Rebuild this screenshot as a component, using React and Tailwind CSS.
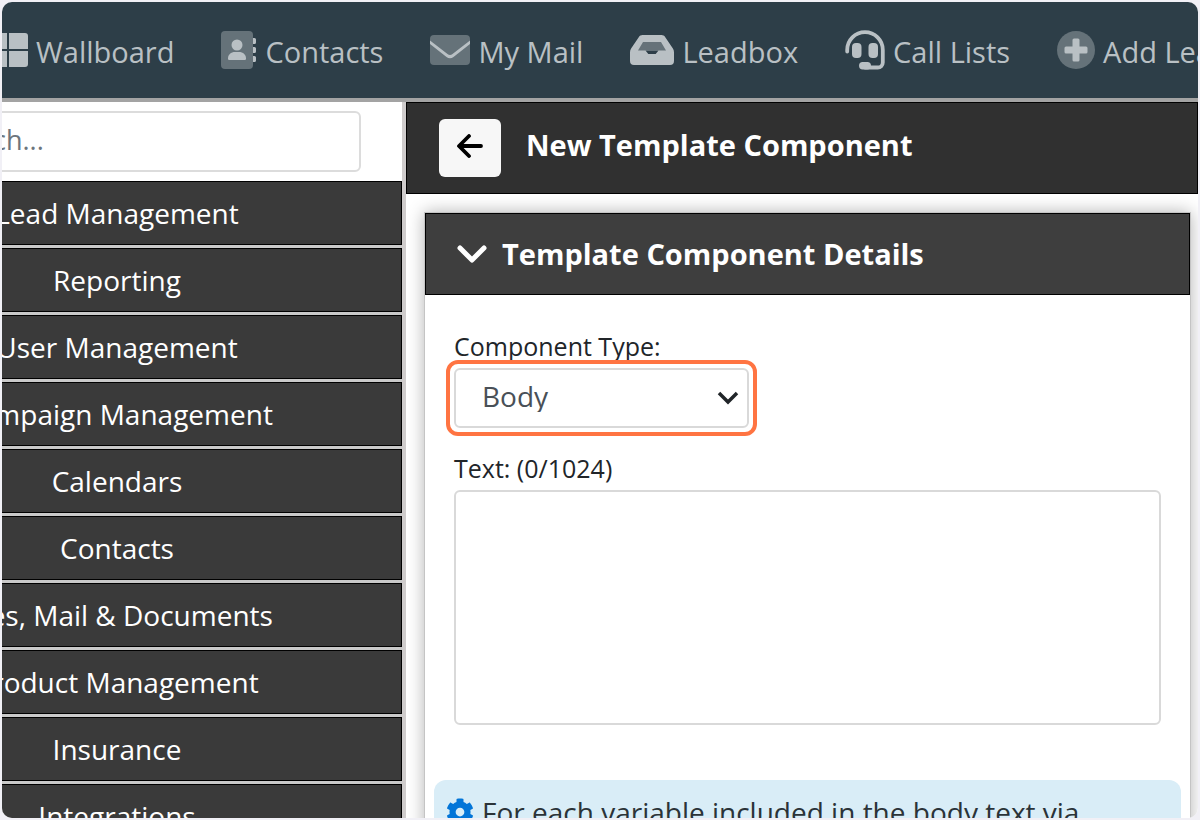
import React from "react";

function GridIcon() {
  return (
    <svg viewBox="0 0 40 36" className="h-9 w-10 shrink-0" fill="currentColor" aria-hidden="true">
      <path d="M3 1h16v16H0V4a3 3 0 0 1 3-3zM21 1h16a3 3 0 0 1 3 3v13H21zM0 19h19v16H3a3 3 0 0 1-3-3zM21 19h19v13a3 3 0 0 1-3 3H21z" />
    </svg>
  );
}

function ContactsIcon() {
  return (
    <svg viewBox="0 0 36 38" className="h-[38px] w-9 shrink-0" fill="currentColor" aria-hidden="true">
      <rect x="0" y="0" width="32" height="38" rx="4" opacity="0.4" />
      <circle cx="16" cy="14" r="5.5" />
      <path d="M7 27.5c0-4 3-6.500 7-6.500h4c4 0 7 2.500 7 6.500 0 1-.6 1.500-1.500 1.500h-15C7.600 29 7 28.500 7 27.500z" />
      <path d="M32 7h1.500a1.500 1.500 0 0 1 1.500 1.500v3a1.500 1.500 0 0 1-1.500 1.500H32zM32 16h1.500a1.500 1.500 0 0 1 1.500 1.500v3a1.500 1.500 0 0 1-1.500 1.500H32zM32 25h1.500a1.500 1.500 0 0 1 1.500 1.500v3a1.500 1.500 0 0 1-1.500 1.500H32z" />
    </svg>
  );
}

function MailIcon() {
  return (
    <svg viewBox="0 0 40 30" className="h-[30px] w-10 shrink-0" fill="currentColor" aria-hidden="true">
      <path opacity="0.4" d="M4 0h32a4 4 0 0 1 4 4v22a4 4 0 0 1-4 4H4a4 4 0 0 1-4-4V4a4 4 0 0 1 4-4z" />
      <path d="M0 5.500v3.500l16.500 13c2.200 1.700 4.800 1.700 7 0L40 9V5.500L22.500 19c-1.600 1.200-3.400 1.200-5 0z" />
    </svg>
  );
}

function InboxIcon() {
  return (
    <svg viewBox="0 0 44 30" className="h-[30px] w-11 shrink-0" fill="currentColor" aria-hidden="true">
      <path opacity="0.4" d="M12 5h20l6 11H6z" />
      <path
        fillRule="evenodd"
        d="M12.500 0h19c1.500 0 2.800.7 3.600 1.900l7.800 11.700c.7 1 1.100 2.300 1.100 3.600V26a4 4 0 0 1-4 4H4a4 4 0 0 1-4-4v-8.800c0-1.300.4-2.600 1.100-3.600L8.900 1.900C9.700.7 11 0 12.500 0zM13 7 8 15.500h7.500l2.800 3.500h7.400l2.800-3.500H36L31 7z"
      />
    </svg>
  );
}

function HeadsetIcon() {
  return (
    <svg viewBox="0 0 40 40" className="size-10 shrink-0" fill="none" stroke="currentColor" aria-hidden="true">
      <path d="M2.200 21.500V20a17.800 17.800 0 0 1 35.600 0v12.500a5 5 0 0 1-5 5H20" strokeWidth="3.800" strokeLinecap="round" />
      <rect x="7" y="13" width="9.500" height="15" rx="4" fill="currentColor" stroke="none" />
      <rect x="23.500" y="13" width="9.500" height="15" rx="4" fill="currentColor" stroke="none" />
      <rect x="14" y="32" width="12" height="7.500" rx="3.700" fill="currentColor" stroke="none" />
    </svg>
  );
}

function PlusIcon() {
  return (
    <svg viewBox="0 0 38 38" className="size-[38px] shrink-0" fill="currentColor" aria-hidden="true">
      <circle cx="19" cy="19" r="19" opacity="0.4" />
      <path d="M15.500 9A1.500 1.500 0 0 1 17 7.500h4A1.500 1.500 0 0 1 22.500 9v6.500H29a1.500 1.500 0 0 1 1.500 1.500v4a1.500 1.500 0 0 1-1.500 1.500h-6.500V29a1.500 1.500 0 0 1-1.500 1.500h-4a1.500 1.500 0 0 1-1.500-1.500v-6.500H9A1.500 1.500 0 0 1 7.500 21v-4A1.500 1.500 0 0 1 9 15.500h6.500z" />
    </svg>
  );
}

const navItems = [
  { label: "Wallboard", Icon: GridIcon },
  { label: "Contacts", Icon: ContactsIcon },
  { label: "My Mail", Icon: MailIcon },
  { label: "Leadbox", Icon: InboxIcon },
  { label: "Call Lists", Icon: HeadsetIcon },
  { label: "Add Lead", Icon: PlusIcon },
];

const menuItems = [
  "Lead Management",
  "Reporting",
  "User Management",
  "Campaign Management",
  "Calendars",
  "Contacts",
  "Files, Mail & Documents",
  "Product Management",
  "Insurance",
  "Integrations",
];

function TopNav() {
  return (
    <nav className="-ml-3.5 flex h-24 shrink-0 items-center gap-[47px] bg-[#2d3e48] pt-1 text-[29px] text-[#b9c0c4]">
      {navItems.map(({ label, Icon }) => (
        <a key={label} href="#" className="flex shrink-0 items-center gap-2 whitespace-nowrap">
          <span className="shrink-0 pb-1">
            <Icon />
          </span>
          <span>{label}</span>
        </a>
      ))}
    </nav>
  );
}

function Sidebar() {
  return (
    <aside className="-ml-[170px] flex w-[574px] shrink-0 flex-col overflow-hidden border-r-4 border-[#cfcccc] bg-white">
      <div className="px-[41px] py-[9px]">
        <input
          type="text"
          aria-label="Search"
          placeholder="Search..."
          className="h-[61px] w-full rounded-md border-2 border-[#dcdcdc] bg-white pb-1 pl-[62px] text-[27px] text-[#555] placeholder:text-[#6c757d]"
        />
      </div>
      <ul className="flex flex-col gap-[3px] bg-[#c9c9c9]">
        {menuItems.map((item) => (
          <li key={item}>
            <a
              href="#"
              className="flex h-16 items-center justify-center border border-black bg-[#3a3a3a] text-[28px] font-medium whitespace-nowrap text-white"
            >
              {item}
            </a>
          </li>
        ))}
      </ul>
    </aside>
  );
}

function DetailsCard() {
  return (
    <section className="mt-[18px] mr-[7px] ml-[18px] border border-[#c4c4c4] bg-white pb-10 shadow-[0_0_16px_rgba(0,0,0,0.3)]">
      <h2 className="border border-black bg-[#3e3e3e] text-[29px] font-bold text-white">
        <button type="button" className="flex h-20 w-full items-center gap-3.5 px-[30px] text-left">
          <svg viewBox="0 0 32 20" className="h-5 w-8 shrink-0" fill="none" stroke="currentColor" strokeWidth="5" strokeLinecap="round" strokeLinejoin="round" aria-hidden="true">
            <path d="M4 4l12 12L28 4" />
          </svg>
          <span>Template Component Details</span>
        </button>
      </h2>

      <div className="px-[29px] pt-[35px] text-[25px] leading-8 text-[#212529]">
        <label htmlFor="component-type" className="block">
          Component Type:
        </label>
        <div className="relative mt-1.5 w-[295px]">
          <select
            id="component-type"
            defaultValue="Body"
            className="h-[60px] w-full appearance-none rounded-md border-2 border-[#d9d9d9] bg-white pr-12 pb-1 pl-[26px] text-[28px] text-[#495057]"
          >
            <option>Header</option>
            <option>Body</option>
            <option>Footer</option>
            <option>Buttons</option>
          </select>
          <svg viewBox="0 0 22 14" className="pointer-events-none absolute top-[23px] right-2.5 h-3.5 w-[22px] text-[#212529]" fill="none" stroke="currentColor" strokeWidth="3.500" aria-hidden="true">
            <path d="M2 2l9 9 9-9" />
          </svg>
          <span className="pointer-events-none absolute -inset-2 rounded-xl border-4 border-[#ff7442]" />
        </div>

        <label htmlFor="component-text" className="mt-6 block">
          Text: (0/1024)
        </label>
        <textarea
          id="component-text"
          className="mt-1.5 block h-[235px] w-full resize-none rounded-md border-2 border-[#d9d9d9] bg-white p-3"
        />
      </div>

      <div className="mx-[9px] mt-[55px] flex gap-2 rounded-xl bg-[#d9edf7] px-3 pt-3.5 pb-6 text-[28px] leading-9 text-[#2b3338]">
        <svg viewBox="0 0 512 512" className="mt-1 size-7 shrink-0 text-[#0275d8]" fill="currentColor" aria-hidden="true">
          <path d="M487.400 315.700l-42.600-24.600c4.300-23.200 4.300-47 0-70.200l42.600-24.600c4.900-2.800 7.100-8.600 5.500-14-11.100-35.600-30-67.800-54.700-94.600-3.800-4.100-10-5.100-14.800-2.300L380.800 110c-17.900-15.400-38.500-27.300-60.800-35.100V25.800c0-5.600-3.900-10.500-9.400-11.700-36.700-8.200-74.300-7.800-109.200 0-5.500 1.200-9.400 6.100-9.400 11.700V75c-22.200 7.900-42.800 19.800-60.800 35.100L88.700 85.500c-4.900-2.800-11-1.900-14.800 2.300-24.700 26.700-43.600 58.900-54.700 94.600-1.700 5.400.6 11.200 5.500 14L67.300 221c-4.300 23.200-4.300 47 0 70.200l-42.600 24.600c-4.900 2.800-7.100 8.600-5.500 14 11.100 35.600 30 67.800 54.700 94.600 3.800 4.100 10 5.100 14.800 2.300l42.600-24.600c17.900 15.400 38.500 27.300 60.800 35.100v49.200c0 5.600 3.900 10.500 9.400 11.700 36.700 8.200 74.300 7.800 109.200 0 5.500-1.200 9.400-6.100 9.400-11.700v-49.200c22.200-7.900 42.800-19.800 60.800-35.100l42.600 24.600c4.900 2.800 11 1.900 14.800-2.300 24.700-26.700 43.600-58.900 54.700-94.600 1.500-5.500-.7-11.300-5.600-14.100zM256 336c-44.100 0-80-35.900-80-80s35.900-80 80-80 80 35.900 80 80-35.900 80-80 80z" />
        </svg>
        <p>For each variable included in the body text via</p>
      </div>
    </section>
  );
}

export default function App() {
  return (
    <div className="h-screen bg-[#f1f0f6] p-0.5 font-['Open_Sans','Noto_Sans',sans-serif]">
      <div className="flex h-full flex-col overflow-hidden rounded-[10px] bg-white">
        <TopNav />
        <div className="flex min-h-0 flex-1 border-t-4 border-[#a3a3a3]">
          <Sidebar />
          <main className="min-w-0 flex-1 overflow-hidden bg-white">
            <header className="flex h-[92px] items-center gap-[25px] border border-black bg-[#303030] px-8 text-white">
              <button type="button" aria-label="Back" className="flex h-[58px] w-[62px] items-center justify-center rounded-md bg-[#f7f7f7] pb-1 text-black">
                <svg viewBox="0 0 28 24" className="h-6 w-7" fill="none" stroke="currentColor" strokeWidth="3.800" strokeLinecap="round" strokeLinejoin="round" aria-hidden="true">
                  <path d="M13 2L3 12l10 10M3.500 12H25" />
                </svg>
              </button>
              <h1 className="pb-1.5 text-[29px] font-bold">New Template Component</h1>
            </header>
            <DetailsCard />
          </main>
        </div>
      </div>
    </div>
  );
}
